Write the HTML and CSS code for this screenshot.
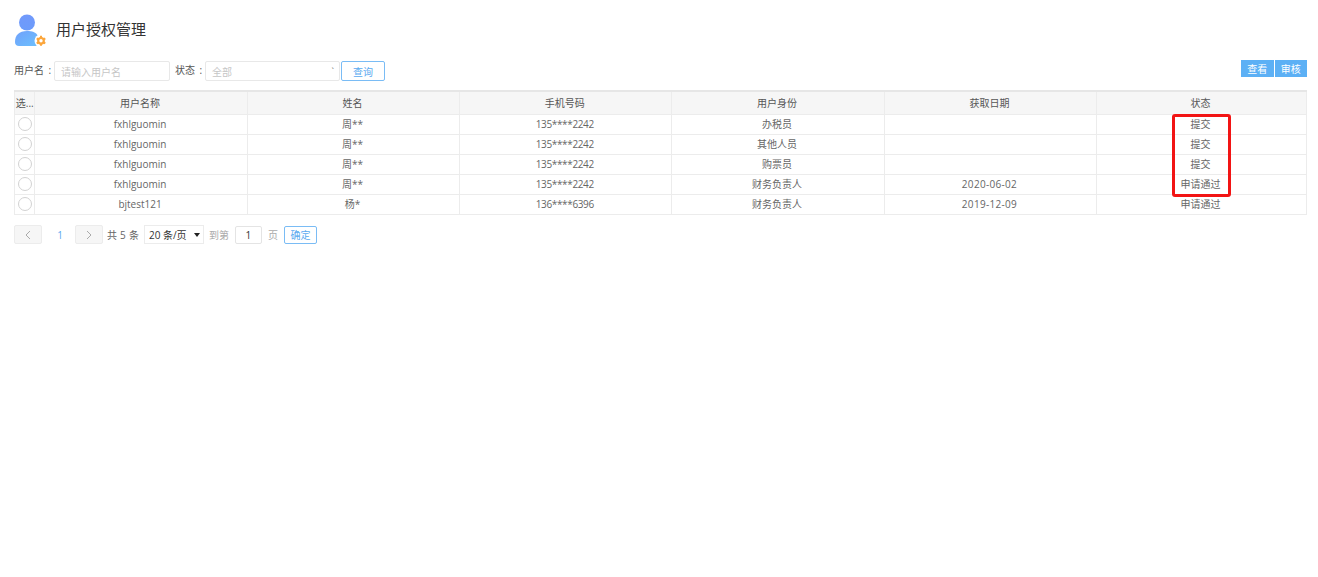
FILE: index.html
```html
<!DOCTYPE html>
<html lang="zh-CN">
<head>
<meta charset="utf-8">
<title>用户授权管理</title>
<link rel="stylesheet" href="styles.css">
</head>
<body>
<header class="title-row">
  <svg class="logo" width="34" height="34" viewBox="0 0 34 34">
    <defs>
      <linearGradient id="g1" x1="0" y1="0" x2="0" y2="1"><stop offset="0" stop-color="#7199fb"/><stop offset="1" stop-color="#6c9cfb"/></linearGradient>
      <linearGradient id="g2" x1="0" y1="0" x2="1" y2="1"><stop offset="0" stop-color="#70a0fb"/><stop offset="1" stop-color="#6cc0fd"/></linearGradient>
    </defs>
    <circle cx="13" cy="8.500" r="8" fill="url(#g1)"/>
    <path d="M1 28c0-7 4-11 12-11 5 0 9 1 11 5v10H5c-2.500 0-4-1.500-4-4z" fill="url(#g2)"/>
    <circle cx="27" cy="26.800" r="6.500" fill="#fff"/>
    <g fill="none" stroke="#fba63c">
      <circle cx="27" cy="26.800" r="2.800" stroke-width="2.200"/>
      <path d="M27 21.800v2M27 29.800v2M22.700 24.300l1.700 1M29.600 28.300l1.700 1M22.700 29.300l1.700-1M29.600 25.300l1.700-1" stroke-width="2"/>
    </g>
  </svg>
  <h1 class="title">用户授权管理</h1>
</header>

<div class="toolbar">
  <form class="filters">
    <label class="label">用户名 :</label>
    <span class="input name-input">请输入用户名</span>
    <label class="label status-label">状态 :</label>
    <span class="input status-input">全部<i class="caret">`</i></span>
    <button type="button" class="query">查询</button>
  </form>
  <div class="actions">
    <button type="button" class="action">查看</button><button type="button" class="action">审核</button>
  </div>
</div>

<div class="table-wrap">
  <table class="grid">
    <colgroup>
      <col class="c0"><col class="c1"><col class="c1"><col class="c1"><col class="c1"><col class="c1"><col>
    </colgroup>
    <thead>
      <tr><th>选...</th><th>用户名称</th><th>姓名</th><th>手机号码</th><th>用户身份</th><th>获取日期</th><th>状态</th></tr>
    </thead>
    <tbody>
      <tr><td><i class="radio"></i></td><td>fxhlguomin</td><td>周**</td><td class="phone">135****2242</td><td>办税员</td><td></td><td>提交</td></tr>
      <tr><td><i class="radio"></i></td><td>fxhlguomin</td><td>周**</td><td class="phone">135****2242</td><td>其他人员</td><td></td><td>提交</td></tr>
      <tr><td><i class="radio"></i></td><td>fxhlguomin</td><td>周**</td><td class="phone">135****2242</td><td>购票员</td><td></td><td>提交</td></tr>
      <tr><td><i class="radio"></i></td><td>fxhlguomin</td><td>周**</td><td class="phone">135****2242</td><td>财务负责人</td><td class="date">2020-06-02</td><td>申请通过</td></tr>
      <tr><td><i class="radio"></i></td><td>bjtest121</td><td>杨*</td><td class="phone">136****6396</td><td>财务负责人</td><td class="date">2019-12-09</td><td>申请通过</td></tr>
    </tbody>
  </table>
  <div class="highlight"></div>
</div>

<nav class="pager">
  <button type="button" class="page-arrow"><svg width="6" height="10" viewBox="0 0 6 10"><path d="M5 1 1 5l4 4" fill="none" stroke="#aaa"/></svg></button>
  <span class="page-current">1</span>
  <button type="button" class="page-arrow"><svg width="6" height="10" viewBox="0 0 6 10"><path d="M1 1l4 4-4 4" fill="none" stroke="#aaa"/></svg></button>
  <span class="total">共 5 条</span>
  <span class="page-size">20 条/页<i class="tri"></i></span>
  <span class="muted goto">到第</span>
  <span class="page-input">1</span>
  <span class="muted">页</span>
  <button type="button" class="confirm">确定</button>
</nav>
</body>
</html>
```
FILE: styles.css
```css
* { box-sizing: border-box; }
html, body { margin: 0; background: #fff; }
body {
  width: 1318px;
  height: 577px;
  overflow: hidden;
  padding: 14px 11px 0 14px;
  font-family: "Open Sans", "Noto Sans CJK SC", sans-serif;
  font-size: 10px;
  color: #666;
}
button { font-family: inherit; font-size: 10px; padding: 0; cursor: pointer; }
i { font-style: normal; }

.title-row { display: flex; align-items: center; height: 34px; gap: 8px; }
.logo { flex: none; }
.title { margin: 0 0 5px; font-size: 15px; font-weight: 400; color: #333; line-height: 30px; }

.toolbar { display: flex; justify-content: space-between; align-items: flex-start; margin-top: 13px; height: 29px; }
.filters { display: flex; align-items: center; height: 20px; }
.label { color: #555; width: 40px; white-space: nowrap; padding-bottom: 2px; line-height: 14px; word-spacing: 2px; }
.status-label { margin-left: 5px; width: 30px; }
.input {
  display: flex; align-items: center; justify-content: space-between;
  height: 20px; padding: 0 6px;
  border: 1px solid #e8e8e8; border-radius: 2px;
  color: #c6c6c6; background: #fff;
}
.name-input { width: 116px; }
.status-input { width: 135px; }
.caret { color: #777; font-size: 9px; margin-right: -1px; }
.query {
  width: 44px; height: 20px; margin-left: 1px;
  background: #fff; border: 1px solid #7abcf5; border-radius: 2px; color: #5aaaf0;
}
.actions { display: flex; gap: 1px; margin-top: -1px; }
.action {
  width: 32.500px; height: 17px;
  background: #5cb0f5; border: 0; color: #fff;
}

.table-wrap { position: relative; }
.grid {
  width: 1293px;
  table-layout: fixed;
  border-collapse: collapse;
  border: 1px solid #ececec;
  border-top: 2px solid #e6e6e6;
}
.c0 { width: 20.400px; }
.c1 { width: 212.350px; }
.grid th, .grid td {
  border-left: 1px solid #ececec;
  border-bottom: 1px solid #ececec;
  padding: 0 2px 0 0;
  text-align: center;
  font-weight: 400;
  white-space: nowrap;
  overflow: hidden;
}
.grid th { height: 23px; background: #f6f6f6; color: #555; }
.grid td { height: 20px; color: #666; padding-bottom: 1px; }
.grid th:first-child, .grid td:first-child { border-left: 0; padding-right: 0; }
.grid .phone { letter-spacing: -.35px; }
.grid .date { letter-spacing: .3px; }
.radio {
  display: block; width: 14px; height: 14px; margin: 0 auto;
  border: 1.500px solid #d2d2d2; border-radius: 50%; background: #fff;
}
.highlight {
  position: absolute;
  left: 1158px; top: 24px;
  width: 59px; height: 83px;
  border: 3px solid #f21414;
  border-radius: 3px;
  pointer-events: none;
}

.pager { display: flex; align-items: center; height: 20px; margin-top: 10px; }
.page-arrow {
  display: flex; align-items: center; justify-content: center;
  width: 28px; height: 19px;
  background: #f6f6f6; border: 1px solid #ececec; border-radius: 2px;
}
.page-current { width: 33px; padding-left: 3px; text-align: center; color: #5aaaf0; }
.total { margin-left: 4px; color: #666; word-spacing: .5px; }
.page-size {
  display: flex; align-items: center; justify-content: space-between;
  width: 60px; height: 19px; margin-left: 5px; padding: 0 3px 0 4px;
  border: 1px solid #ececec; color: #333;
}
.tri { width: 0; height: 0; border: 3px solid transparent; border-top: 4px solid #222; border-bottom: 0; }
.muted { color: #aaa; }
.goto { margin-left: 5px; }
.page-input {
  width: 27px; height: 18px; margin: 0 6px;
  display: flex; align-items: center; justify-content: center;
  border: 1px solid #e4e4e4; border-radius: 2px; color: #333;
}
.confirm {
  width: 33px; height: 18px; margin-left: 6px;
  background: #fff; border: 1px solid #7abcf5; border-radius: 2px; color: #5aaaf0;
}
```
